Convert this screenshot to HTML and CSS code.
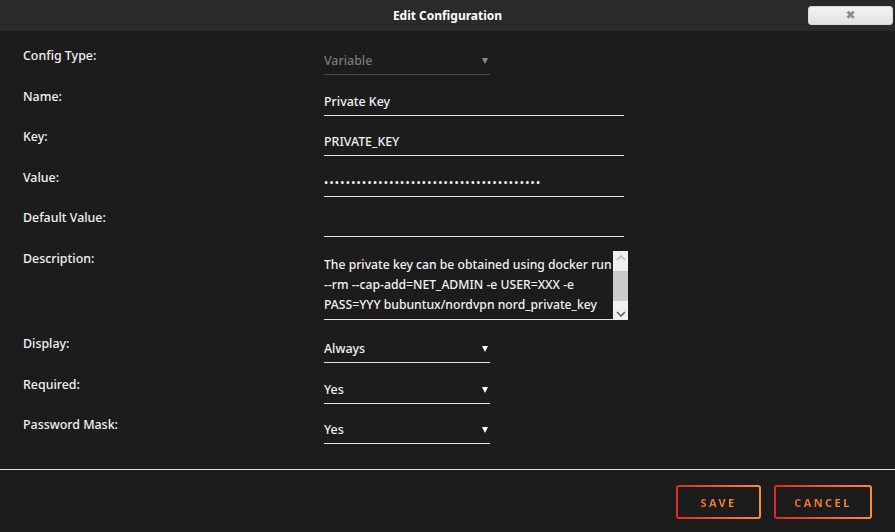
FILE: index.html
```html
<!DOCTYPE html>
<html lang="en">

<head>
  <meta charset="UTF-8">
  <meta name="viewport" content="width=device-width, initial-scale=1.0">
  <title>Edit Configuration</title>
  <link rel="stylesheet" href="styles.css">
</head>

<body>
  <div class="dialog">
    <header class="titlebar">
      <h1>Edit Configuration</h1>
      <button class="close" type="button">&#10006;</button>
    </header>

    <form class="config">
      <div class="row">
        <label>Config Type:</label>
        <div class="select disabled"><span>Variable</span><i class="caret"></i></div>
      </div>
      <div class="row">
        <label>Name:</label>
        <div class="input">Private Key</div>
      </div>
      <div class="row">
        <label>Key:</label>
        <div class="input">PRIVATE_KEY</div>
      </div>
      <div class="row">
        <label>Value:</label>
        <div class="input"><span class="mask">&bull;&bull;&bull;&bull;&bull;&bull;&bull;&bull;&bull;&bull;&bull;&bull;&bull;&bull;&bull;&bull;&bull;&bull;&bull;&bull;&bull;&bull;&bull;&bull;&bull;&bull;&bull;&bull;&bull;&bull;&bull;&bull;&bull;&bull;&bull;&bull;&bull;&bull;&bull;&bull;</span></div>
      </div>
      <div class="row">
        <label>Default Value:</label>
        <div class="input"></div>
      </div>
      <div class="row tall">
        <label>Description:</label>
        <div class="textarea">
          <div class="text">
            <span>The private key can be obtained using docker run</span>
            <span>--rm --cap-add=NET_ADMIN -e USER=XXX -e</span>
            <span>PASS=YYY bubuntux/nordvpn nord_private_key</span>
          </div>
          <div class="scrollbar">
            <svg class="arrow" viewBox="0 0 10 6" width="10" height="6"><path d="M1 5 L5 1 L9 5" fill="none" stroke="#b8b8b8" stroke-width="1.6"/></svg>
            <div class="thumb"></div>
            <svg class="arrow" viewBox="0 0 10 6" width="10" height="6"><path d="M1 1 L5 5 L9 1" fill="none" stroke="#606060" stroke-width="1.6"/></svg>
          </div>
        </div>
      </div>
      <div class="row">
        <label>Display:</label>
        <div class="select"><span>Always</span><i class="caret"></i></div>
      </div>
      <div class="row">
        <label>Required:</label>
        <div class="select"><span>Yes</span><i class="caret"></i></div>
      </div>
      <div class="row">
        <label>Password Mask:</label>
        <div class="select"><span>Yes</span><i class="caret"></i></div>
      </div>
    </form>

    <footer class="actions">
      <button class="btn" type="button"><span>SAVE</span></button>
      <button class="btn" type="button"><span>CANCEL</span></button>
    </footer>
  </div>
</body>

</html>
```

FILE: styles.css
```css
:root {
  --bg: #1c1c1c;
  --bar: #2a2a2a;
  --text: #f2f2f2;
  --line: #e4e4e4;
  --orange-a: #e22828;
  --orange-b: #ff8c2f;
}

* {
  box-sizing: border-box;
}

body {
  margin: 0;
  background: var(--bg);
  color: var(--text);
  font-family: "Noto Sans", "Open Sans", sans-serif;
  font-size: 12.4px;
  font-weight: 500;
  overflow: hidden;
}

.dialog {
  width: 895px;
  height: 532px;
  display: flex;
  flex-direction: column;
}

.titlebar {
  height: 31px;
  background: var(--bar);
  display: grid;
  grid-template-columns: 1fr auto 1fr;
  align-items: center;

  h1 {
    grid-column: 2;
    margin: 0;
    font-size: 12px;
    font-weight: 700;
    color: #fff;
  }

  .close {
    grid-column: 3;
    justify-self: end;
    margin: 0 2px 0 0;
    width: 85px;
    height: 19px;
    padding: 0;
    border: 1px solid #d8d8d8;
    border-radius: 3px;
    background: linear-gradient(#f3f3f3, #e2e2e2);
    color: #8a8a8a;
    font-size: 12px;
    line-height: 17px;
    font-family: "DejaVu Sans", sans-serif;
  }
}

.config {
  padding: 15px 0 0 23px;
}

.row {
  height: 40.5px;
  display: grid;
  grid-template-columns: 301px auto;
  align-items: start;

  label {
    line-height: 20px;
  }
}

.row.tall {
  height: 85.5px;
}

.input,
.select {
  padding: 5px 0 3px;
  line-height: 20px;
  height: 29px;
  border-bottom: 1px solid var(--line);
}

.input {
  width: 300px;
}

.mask {
  font-size: 11px;
  letter-spacing: 1.3px;
  vertical-align: 1px;
}

.select {
  width: 166px;
  display: flex;
  justify-content: space-between;
  align-items: center;

  .caret {
    width: 0;
    height: 0;
    margin-right: 2px;
    border-left: 3px solid transparent;
    border-right: 3px solid transparent;
    border-top: 6px solid #fff;
  }
}

.select.disabled {
  color: #7a7a7a;
  border-bottom-color: #4a4a4a;

  .caret {
    border-top-color: #8a8a8a;
  }
}

.textarea {
  margin-top: 2px;
  display: flex;
  width: 304px;
  height: 69px;

  .text {
    flex: 1;
    padding: 4px 0 3px;
    font-size: 12.2px;
    line-height: 20px;
    border-bottom: 1px solid var(--line);
    white-space: nowrap;
    overflow: hidden;

    span {
      display: block;
    }
  }
}

.scrollbar {
  width: 15px;
  background: #f0f0f0;
  display: flex;
  flex-direction: column;
  align-items: center;
  justify-content: space-between;
  padding: 4px 0 3px;

  .thumb {
    width: 15px;
    height: 30px;
    background: #cdcdcd;
  }
}

.actions {
  margin-top: 13.5px;
  border-top: 1px solid var(--line);
  padding: 15px 23px 0 0;
  display: flex;
  justify-content: flex-end;
  gap: 13px;
}

.btn {
  height: 34px;
  padding: 0 25px;
  border: 2px solid transparent;
  border-radius: 3px;
  background:
    linear-gradient(var(--bg), var(--bg)) padding-box,
    linear-gradient(90deg, var(--orange-a), var(--orange-b)) border-box;
  font-family: "Noto Sans", sans-serif;
  font-size: 11px;
  font-weight: 700;
  letter-spacing: 2.4px;

  span {
    background: linear-gradient(90deg, #f06a2c, #ff8c2f);
    -webkit-background-clip: text;
    background-clip: text;
    color: transparent;
  }
}

.btn:first-child {
  width: 85px;
  padding: 0;
}

.btn:last-child {
  width: 98px;
  padding: 0;
}
```
